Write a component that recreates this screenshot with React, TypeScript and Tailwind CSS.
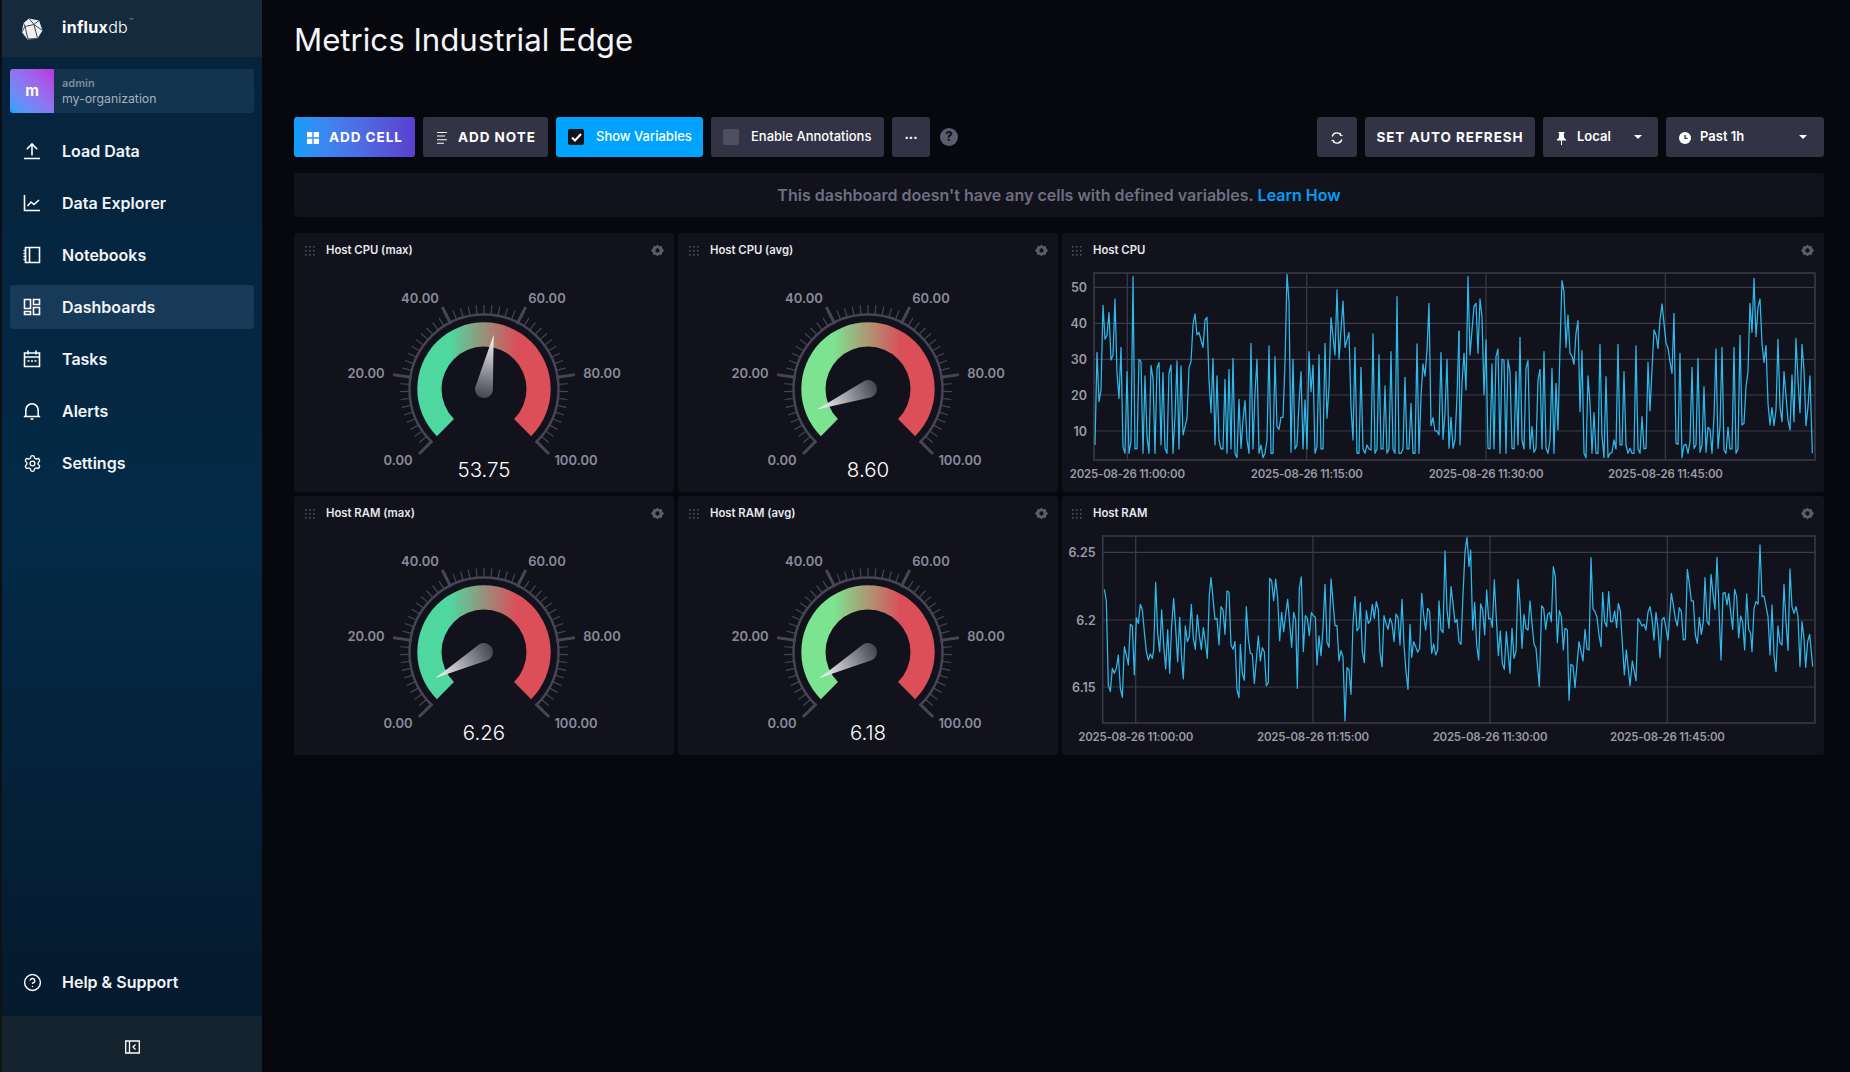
import { CircleHelp, Settings } from "lucide-react";
import type { ReactNode } from "react";

// chart traces are traced off the picture, in 3x pixels: [left half, right half]
const CPU_A = "105,645 111,367 117,515 123,480 129,226 135,328 141,315 147,247 153,390 159,375 165,207 171,430 177,505 183,352 189,650 195,670 201,425 207,670 213,635 219,140 225,657 231,657 237,388 243,395 249,670 255,438 261,620 267,670 273,407 279,445 285,670 291,415 297,398 303,645 309,428 315,655 321,670 327,430 333,405 339,670 345,560 351,393 357,657 363,408 369,615 375,590 381,565 387,413 393,395 399,285 405,252 411,315 417,307 423,330 429,352 435,270 441,262 447,450 453,548 459,385 465,645 471,438 477,630 483,657 489,657 495,448 501,670 507,418 513,657 519,385 525,670 531,683 537,508 543,655 549,570 555,512 561,630 567,670 573,340 579,657 585,490 591,388 597,670 603,645 609,683 615,670 621,630 627,348 633,670 639,670 645,380 651,590 657,598 663,562 669,562 675,400 681,133 687,215 693,667 699,388 705,657 711,645 717,520 723,425 729,657 735,510 741,657 747,365 753,485 759,405 765,670 771,650 777,375 783,657 789,657 795,340 801,565 807,470 813,263 819,320 825,375 831,180 837,388 843,300 849,213 855,352 861,330 867,307 873,530 879,630 885,352 891,670 897,670 903,412 909,657 915,670 921,645 927,657 933,660 939,312 945,670 951,657 957,375 963,657 969,657 975,468 981,670 987,657 993,365 999,657 1005,670 1011,200 1017,670 1023,670 1029,657 1035,442 1041,657 1047,657 1053,520 1059,670 1065,670 1071,342 1077,670 1083,500 1089,402 1095,438 1101,360 1107,220 1113,587 1119,563 1125,603 1131,603 1137,615 1143,367 1149,628 1155,550 1161,388 1167,655 1173,562 1179,655 1185,630 1191,500 1197,302";
const CPU_B = "27,302 30,645 36,460 42,370 48,480 54,140 60,375 66,300 72,230 78,220 84,370 90,207 96,260 102,495 108,330 114,655 120,657 126,402 132,657 138,380 144,357 150,670 156,388 162,390 168,670 174,390 180,425 186,655 192,657 198,425 204,645 210,322 216,630 222,657 228,415 234,392 240,657 246,590 252,667 258,655 264,450 270,418 276,657 282,365 288,655 294,670 300,630 306,415 312,670 318,460 324,600 330,350 336,152 342,185 348,352 354,255 360,370 366,378 372,403 378,310 384,272 390,545 396,362 402,670 408,683 414,438 420,520 426,670 432,548 438,670 444,670 450,343 456,620 462,683 468,440 474,683 480,670 486,667 492,630 498,657 504,343 510,645 516,645 522,425 528,645 534,670 540,655 546,670 552,670 558,348 564,657 570,670 576,560 582,657 588,655 594,397 600,543 606,420 612,300 618,315 624,355 630,270 636,222 642,280 648,338 654,355 660,395 666,430 672,250 678,640 684,643 690,370 696,683 702,645 708,643 714,670 720,635 726,412 732,655 738,645 744,385 750,667 756,645 762,470 768,667 774,592 780,598 786,670 792,560 798,357 804,655 810,590 816,352 822,660 828,670 834,592 840,657 846,657 852,352 858,670 864,657 870,316 876,585 882,580 888,470 894,425 900,220 906,307 912,145 918,320 924,232 930,207 936,340 942,397 948,347 954,520 960,585 966,533 972,587 978,540 984,328 990,530 996,575 1002,425 1008,500 1014,570 1020,600 1026,435 1032,575 1038,325 1044,450 1050,548 1056,343 1062,420 1068,587 1074,530 1080,438 1087,670";
const RAM_A = "133,283 139,318 145,570 151,590 157,520 163,535 169,520 175,480 181,580 187,607 193,455 199,480 205,510 211,388 217,393 223,540 229,368 235,385 241,328 247,345 253,410 259,470 265,495 271,477 277,490 281,465 287,262 293,415 299,470 305,345 311,450 317,522 323,405 329,535 335,390 341,310 347,400 353,500 359,367 365,490 370,552 376,393 382,440 388,425 394,328 400,430 406,463 412,360 418,420 424,463 430,398 436,440 442,490 448,300 453,248 459,310 465,373 471,370 477,450 483,335 489,345 495,418 501,288 507,292 513,450 519,463 525,440 531,585 537,608 541,448 547,535 553,556 559,335 565,430 571,475 577,477 583,565 589,495 595,423 601,498 607,458 613,470 619,572 625,563 629,250 635,258 641,317 647,252 653,310 659,437 665,352 671,410 677,360 683,313 689,385 695,457 701,352 707,375 712,580 718,280 724,246 730,470 736,362 742,370 748,422 754,353 760,362 766,367 771,510 777,423 783,482 789,400 795,268 801,442 807,457 813,252 819,320 825,392 831,392 837,498 843,467 849,485 855,678 861,518 867,525 873,598 879,385 885,305 891,408 897,398 901,323 907,470 913,503 919,347 925,385 931,377 937,328 943,370 949,320 955,345 960,470 966,515 972,362 978,385 984,403 990,370 996,385 1002,440 1008,357 1014,368 1020,450 1026,313 1032,450 1038,530 1044,583 1050,388 1055,487 1061,440 1067,455 1073,472 1079,460 1085,295 1091,360 1097,405 1103,340 1109,350 1115,475 1121,447 1127,480 1133,465 1137,318 1143,405 1149,413 1155,168 1161,345 1167,400 1173,275 1179,325 1185,382 1191,373 1197,440";
const RAM_B = "27,440 33,448 39,300 45,170 51,127 57,215 62,165 68,405 74,322 80,450 86,495 92,327 98,345 104,420 110,285 116,372 122,370 127,397 133,255 139,370 145,482 151,408 157,505 163,523 169,410 175,480 180,535 186,400 192,490 198,470 204,253 210,325 216,460 222,358 228,400 234,405 240,318 246,385 252,447 258,460 268,575 275,333 281,340 287,403 293,358 299,352 304,380 310,215 316,245 322,443 328,347 334,365 340,465 345,400 352,405 357,616 363,508 369,512 375,578 387,440 399,498 405,403 411,462 417,465 423,188 429,342 435,350 441,367 447,420 453,455 458,292 464,380 470,395 476,290 482,380 488,380 494,348 500,398 505,325 511,348 523,540 529,465 540,572 547,498 558,557 564,370 570,380 576,393 582,388 588,405 594,352 600,335 606,370 612,435 618,352 624,400 630,488 636,375 642,367 648,400 654,435 664,295 670,330 676,370 682,393 688,338 694,350 700,435 706,433 712,223 718,265 724,318 730,318 736,420 742,445 748,367 754,418 760,380 765,248 771,378 777,390 783,238 789,295 795,343 801,187 807,345 813,495 819,295 825,292 831,330 836,296 842,350 848,403 854,283 860,305 866,428 872,363 878,382 884,465 890,297 896,403 902,415 906,470 912,340 918,320 924,327 930,150 936,305 942,303 954,365 960,480 966,330 972,480 978,530 984,393 990,443 996,450 1002,268 1008,380 1014,466 1020,222 1026,335 1032,355 1038,335 1044,365 1050,515 1056,380 1062,430 1067,517 1073,440 1079,418 1088,515";

const polar = (r: number, deg: number) => {
  const a = ((deg - 90) * Math.PI) / 180;
  return { x: r * Math.cos(a), y: r * Math.sin(a) };
};

function arcPath(outer: number, inner: number) {
  const a = polar(outer, -135);
  const b = polar(outer, 135);
  const c = polar(inner, 135);
  const d = polar(inner, -135);
  return `M${a.x} ${a.y} A${outer} ${outer} 0 1 1 ${b.x} ${b.y} L${c.x} ${c.y} A${inner} ${inner} 0 1 0 ${d.x} ${d.y} Z`;
}

function Gauge({ id, value, low }: { id: string; value: string; low: string }) {
  const ring = polar(74.5, -135);
  const ringEnd = polar(74.5, 135);
  return (
    <svg width="380" height="225" viewBox="-190 -122 380 225" className="block">
      <defs>
        <linearGradient id={`arc-${id}`} gradientUnits="userSpaceOnUse" x1="-35" y1="0" x2="33" y2="0">
          <stop offset="0" stopColor={low} />
          <stop offset="1" stopColor="#dc4e58" />
        </linearGradient>
        <linearGradient id={`needle-${id}`} gradientUnits="userSpaceOnUse" x1="0" y1="-55" x2="0" y2="9">
          <stop offset="0" stopColor="#ffffff" />
          <stop offset="1" stopColor="#434352" />
        </linearGradient>
      </defs>
      <path d={arcPath(66.7, 42.5)} fill={`url(#arc-${id})`} />
      <path d={`M${ring.x} ${ring.y} A74.5 74.5 0 1 1 ${ringEnd.x} ${ringEnd.y}`} fill="none" stroke="#454556" strokeWidth="2.5" />
      {Array.from({ length: 51 }, (_, i) => {
        const major = i % 10 === 0;
        const deg = -135 + i * 5.4;
        const p1 = polar(major ? 73 : 75, deg);
        const p2 = polar(major ? 92 : 84, deg);
        return <line key={i} x1={p1.x} y1={p1.y} x2={p2.x} y2={p2.y} stroke="#454556" strokeWidth={major ? 3 : 1.2} />;
      })}
      <g textAnchor="middle" dominantBaseline="central" className="fill-[#8a8a9b] text-[13px] font-semibold">
        <text x="-86" y="71">0.00</text>
        <text x="-118" y="-16">20.00</text>
        <text x="-64" y="-91">40.00</text>
        <text x="63" y="-91">60.00</text>
        <text x="118" y="-16">80.00</text>
        <text x="92" y="71">100.00</text>
      </g>
      <g transform={`rotate(${-135 + parseFloat(value) * 2.7})`}>
        <path d="M0 -55 L9 0 A9 9 0 1 1 -9 0 Z" fill={`url(#needle-${id})`} />
      </g>
      <text x="0" y="80" textAnchor="middle" dominantBaseline="central" className="fill-white text-[20.5px] font-light">
        {value}
      </text>
    </svg>
  );
}

function LineChart({ yTicks, vLines, left, dy, a, b }: {
  yTicks: [string, number][];
  vLines: number[];
  left: number;
  dy: number;
  a: string;
  b: string;
}) {
  const stamps = ["2025-08-26 11:00:00", "2025-08-26 11:15:00", "2025-08-26 11:30:00", "2025-08-26 11:45:00"];
  return (
    <svg width="762" height="225" viewBox="1 0 762 225" className="block">
      <g stroke="#3b3b4a" fill="none">
        {yTicks.map(([, y]) => <line key={y} x1={left} x2="754" y1={y} y2={y} strokeWidth="1.2" />)}
        {vLines.map((x) => <line key={x} x1={x} x2={x} y1="6" y2="193" strokeWidth="1.2" />)}
        <rect x={left} y="6" width={754 - left} height="187" strokeWidth="1.5" />
      </g>
      <g fill="none" stroke="#2fb8ea" strokeWidth="1.25" strokeLinejoin="round">
        <polyline points={a} vectorEffect="non-scaling-stroke" transform={`translate(-1 ${dy}) scale(0.33333)`} />
        <polyline points={b} vectorEffect="non-scaling-stroke" transform={`translate(389 ${dy}) scale(0.33333)`} />
      </g>
      <g className="fill-[#9a9aa8] font-semibold" dominantBaseline="central">
        {yTicks.map(([t, y]) => <text key={t} x={left - 7} y={y} textAnchor="end" className="text-[12.5px]">{t}</text>)}
        {vLines.map((x, i) => <text key={x} x={x} y="207" textAnchor="middle" className="text-[11.5px] tracking-[-0.02em]">{stamps[i]}</text>)}
      </g>
    </svg>
  );
}

function Grip() {
  return (
    <svg width="11" height="10" viewBox="0 0 11 10" className="fill-[#4f4f60]">
      {[0, 4, 8].map((y) => [0, 4, 8].map((x) => <rect key={`${x}${y}`} x={x} y={y} width="1.6" height="1.6" />))}
    </svg>
  );
}

function Gear() {
  return (
    <svg width="13" height="13" viewBox="0 0 24 24" className="fill-[#5c5c6e]">
      <path fillRule="evenodd" d="M12 1l3 3.2 4.4-.6 1.2 4.3L24 12l-3.4 4.1-1.2 4.3-4.4-.6L12 23l-3-3.2-4.4.6-1.2-4.3L0 12l3.4-4.1 1.2-4.3 4.4.6zM12 8a4 4 0 100 8 4 4 0 000-8z" />
    </svg>
  );
}

function Cell({ title, wide, children }: { title: string; wide?: boolean; children: ReactNode }) {
  return (
    <div className="h-[259px] rounded-[3px] bg-[#11121b]">
      <div className={`flex h-[34px] items-center pr-[10px] pt-[1px] ${wide ? "pl-[10px]" : "pl-[11px]"}`}>
        <Grip />
        <span className="ml-[10px] flex-1 text-[11.3px] font-semibold text-[#e7e8ee]">{title}</span>
        <Gear />
      </div>
      {children}
    </div>
  );
}

const navIcon = "h-[18px] w-[18px] fill-none stroke-white stroke-[1.6]";

const NAV: { label: string; active?: boolean; icon: ReactNode }[] = [
  {
    label: "Load Data",
    icon: <svg viewBox="0 0 18 18" className={navIcon}><path d="M1 16.5h16M9 13.5V2M3.8 7.2L9 2l5.2 5.2" /></svg>,
  },
  {
    label: "Data Explorer",
    icon: <svg viewBox="0 0 18 18" className={navIcon}><path d="M1.5 1v15.5H17M4.5 12l3.5-4 3 2.5L16 6" /></svg>,
  },
  {
    label: "Notebooks",
    icon: <svg viewBox="0 0 18 18" className={navIcon}><path d="M2.5 1.5h14v15h-14zM6.5 1.5v15M.5 4.5h3M.5 7.5h3M.5 10.5h3M.5 13.5h3" /></svg>,
  },
  {
    label: "Dashboards",
    active: true,
    icon: <svg viewBox="0 0 18 18" className={navIcon}><path d="M1.5 1.5h6v9h-6zM10.5 1.5h6v5h-6zM1.5 13.5h6v3h-6zM10.5 9.5h6v7h-6z" /></svg>,
  },
  {
    label: "Tasks",
    icon: <svg viewBox="0 0 18 18" className={navIcon}><path d="M1.5 3h15v13.5h-15zM1.5 7h15M5 .5v4M13 .5v4M4.5 11h2M8 11h2M11.5 11h2" /></svg>,
  },
  {
    label: "Alerts",
    icon: <svg viewBox="0 0 18 18" className={navIcon}><path d="M.8 14.5h16.4M2.8 14.5V8a6.2 6.2 0 0112.4 0v6.5M7.5 17h3" /></svg>,
  },
  {
    label: "Settings",
    icon: <Settings size={19} strokeWidth={1.7} className="text-white" />,
  },
];

function NavItem({ label, active, icon }: { label: string; active?: boolean; icon: ReactNode }) {
  return (
    <div className={`flex h-11 items-center rounded-[3px] ${active ? "bg-[#163a58]" : ""}`}>
      <div className="flex w-11 items-center justify-center">{icon}</div>
      <span className="ml-2 text-[16px] font-semibold text-[#f2f5f9]">{label}</span>
    </div>
  );
}

function Sidebar() {
  return (
    <aside className="flex h-full w-[260px] flex-col bg-linear-to-b from-[#06223a] via-[#032a47] to-[#05182a]">
      <div className="flex h-[57px] items-center bg-[#152b3d] pl-[19px]">
        <svg width="22" height="22" viewBox="0 0 22 22">
          <path d="M8 .5L18 2.5l3.5 10-5 8-10 1L.8 14 2.5 5z" fill="#eef0f2" />
          <path d="M8 .5l5 6 5-4M13 6.5l-9 2-1.5-3.5M4 8.5L7 21M13 6.5l3.5 14M13 6.5l8.5 6M4 8.5L.8 14M7 21l9.5-.5" stroke="#3c4754" strokeWidth="1" fill="none" />
        </svg>
        <span className="ml-[19px] -mt-1 text-[16px] tracking-[0.02em] text-white">
          <span className="font-bold">influx</span><span className="font-light">db</span>
        </span>
        <span className="mb-3 ml-px text-[7px] text-[#8f9aa6]">™</span>
      </div>
      <div className="flex-1 px-2 pt-3">
        <div className="flex h-11 items-center rounded-[3px] bg-[#12344f]">
          <div className="flex h-11 w-11 items-center justify-center rounded-l-[3px] bg-linear-to-tr from-[#00a3ff] to-[#b92fe0] text-[15px] font-bold text-white">
            m
          </div>
          <div className="ml-2 flex flex-col pt-[2px]">
            <span className="text-[11px] leading-[14px] font-semibold text-[#7d8a9a]">admin</span>
            <span className="text-[12.3px] leading-[18px] text-[#a7b0bb]">my-organization</span>
          </div>
        </div>
        <nav className="mt-4 flex flex-col gap-2">
          {NAV.map((n) => <NavItem key={n.label} {...n} />)}
        </nav>
      </div>
      <div className="px-2 pb-3">
        <NavItem label="Help & Support" icon={<CircleHelp size={19} strokeWidth={1.8} className="text-white" />} />
      </div>
      <div className="flex h-14 items-center justify-center bg-[#15232f] pt-[6px]">
        <svg width="15" height="14" viewBox="0 0 15 14" className="fill-none stroke-white stroke-[1.3]">
          <path d="M.7 1h13.6v12H.7zM4.5 1v12M10.5 4.5L8 7l2.5 2.5" />
        </svg>
      </div>
    </aside>
  );
}

const btn = "flex h-10 items-center rounded-[3px] text-white";
const caps = "text-[13.5px] font-bold tracking-[0.07em]";

function Caret() {
  return <span className="h-0 w-0 border-x-[4px] border-t-[4px] border-x-transparent border-t-white" />;
}

function Toolbar() {
  return (
    <div className="mt-[57px] flex h-10 items-center">
      <button className={`${btn} w-[121px] gap-[10px] bg-linear-to-r from-[#0e9dfb] to-[#5a3ecf] pl-[13px] ${caps}`}>
        <svg width="12" height="12" viewBox="0 0 12 12" className="mt-[2px] fill-white">
          <path d="M0 0h5.3v5.3H0zM6.7 0H12v5.3H6.7zM0 6.7h5.3V12H0zM6.7 6.7H12V12H6.7z" />
        </svg>
        ADD CELL
      </button>
      <button className={`${btn} ml-2 w-[125px] gap-[11px] bg-[#333346] pl-[14px] ${caps}`}>
        <svg width="10" height="12" viewBox="0 0 10 12" className="mt-[2px] fill-white">
          <path d="M0 0h10v1H0zM0 3.6h8v1H0zM0 7.2h10v1H0zM0 10.8h7v1H0z" />
        </svg>
        ADD NOTE
      </button>
      <button className={`${btn} ml-2 w-[147px] bg-[#00a3ff] pl-3 text-[13px] font-medium`}>
        <span className="flex h-4 w-4 items-center justify-center rounded-[2px] bg-[#11121b]">
          <svg width="11" height="9" viewBox="0 0 11 9" className="fill-none stroke-white stroke-[2]">
            <path d="M1 4.5L4 7.5 10 1" />
          </svg>
        </span>
        <span className="ml-3">Show Variables</span>
      </button>
      <button className={`${btn} ml-2 w-[173px] bg-[#333346] pl-3 text-[13px] font-medium text-[#e7e8ee]`}>
        <span className="h-4 w-4 rounded-[2px] bg-[#4f4f60]" />
        <span className="ml-3">Enable Annotations</span>
      </button>
      <button className={`${btn} ml-2 w-[38px] justify-center bg-[#333346] text-[13px] font-bold`}>
        <span className="-mt-1">...</span>
      </button>
      <span className="ml-[10px] flex h-[18px] w-[18px] items-center justify-center rounded-full bg-[#5c5c6e] text-[13px] font-extrabold text-[#11121b]">
        ?
      </span>
      <div className="flex-1" />
      <button className={`${btn} w-10 justify-center bg-[#333346]`}>
        <svg width="12" height="12" viewBox="0 0 12 12" className="mt-[2px] fill-none stroke-white stroke-[1.3]">
          <path d="M1.2 4.5A5 5 0 0110 2.8M10.8 7.5A5 5 0 012 9.2" />
          <path d="M9.2 1v2.6H11.6M2.8 11V8.4H.4" strokeWidth="1" />
        </svg>
      </button>
      <button className={`${btn} ml-2 w-[170px] justify-center bg-[#333346] ${caps}`}>SET AUTO REFRESH</button>
      <button className={`${btn} ml-2 w-[115px] bg-[#333346] pl-[14px] text-[13px] font-semibold`}>
        <svg width="9" height="13" viewBox="0 0 9 13" className="mt-[2px] fill-white">
          <path d="M1.5 0h6v1l-.8.6.5 4.4L9 7.5V8.5H5V13H4V8.5H0V7.5L1.8 6l.5-4.4-.8-.6z" />
        </svg>
        <span className="ml-[11px] w-[57px] text-left">Local</span>
        <Caret />
      </button>
      <button className={`${btn} ml-2 w-[158px] bg-[#333346] pl-[13px] text-[13px] font-semibold`}>
        <svg width="12" height="12" viewBox="0 0 12 12" className="mt-[2px]">
          <circle cx="6" cy="6" r="6" fill="#fff" />
          <path d="M6 3v3.4h2.6" stroke="#333346" strokeWidth="1.3" fill="none" />
        </svg>
        <span className="ml-[9px] w-[99px] text-left">Past 1h</span>
        <Caret />
      </button>
    </div>
  );
}

const CPU_TICKS: [string, number][] = [["50", 20.3], ["40", 56.3], ["30", 92.3], ["20", 128], ["10", 164]];
const RAM_TICKS: [string, number][] = [["6.25", 22.3], ["6.2", 90], ["6.15", 157]];

export default function App() {
  return (
    <div className="flex h-[1072px] w-[1850px] overflow-hidden bg-[#07070e] font-['Inter',sans-serif]">
      <div className="h-full w-0.5 bg-linear-to-b from-[#0b0e14] to-[#0c1412]" />
      <Sidebar />
      <main className="flex-1 pl-8 pr-[26px]">
        <h1 className="pt-[20px] text-[31.2px] leading-10 font-normal text-[#f4f5f8]">Metrics Industrial Edge</h1>
        <Toolbar />
        <div className="mt-4 flex h-11 items-center justify-center rounded-[3px] bg-[#11121b] pb-px text-[16px] font-semibold text-[#6e6f80]">
          <span>This dashboard doesn't have any cells with defined variables.</span>
          <a className="ml-1 text-[#009ff5]">Learn How</a>
        </div>
        <div className="mt-4 grid grid-cols-[380px_380px_1fr] gap-1">
          <Cell title="Host CPU (max)"><Gauge id="a" value="53.75" low="#4ed8a0" /></Cell>
          <Cell title="Host CPU (avg)"><Gauge id="b" value="8.60" low="#7ce490" /></Cell>
          <Cell title="Host CPU" wide>
            <LineChart yTicks={CPU_TICKS} vLines={[66.3, 245.7, 425, 604.3]} left={33} dy={-37} a={CPU_A} b={CPU_B} />
          </Cell>
          <Cell title="Host RAM (max)"><Gauge id="c" value="6.26" low="#4ed8a0" /></Cell>
          <Cell title="Host RAM (avg)"><Gauge id="d" value="6.18" low="#7ce490" /></Cell>
          <Cell title="Host RAM" wide>
            <LineChart yTicks={RAM_TICKS} vLines={[74.7, 252, 429, 606.3]} left={41.7} dy={-35} a={RAM_A} b={RAM_B} />
          </Cell>
        </div>
      </main>
    </div>
  );
}
